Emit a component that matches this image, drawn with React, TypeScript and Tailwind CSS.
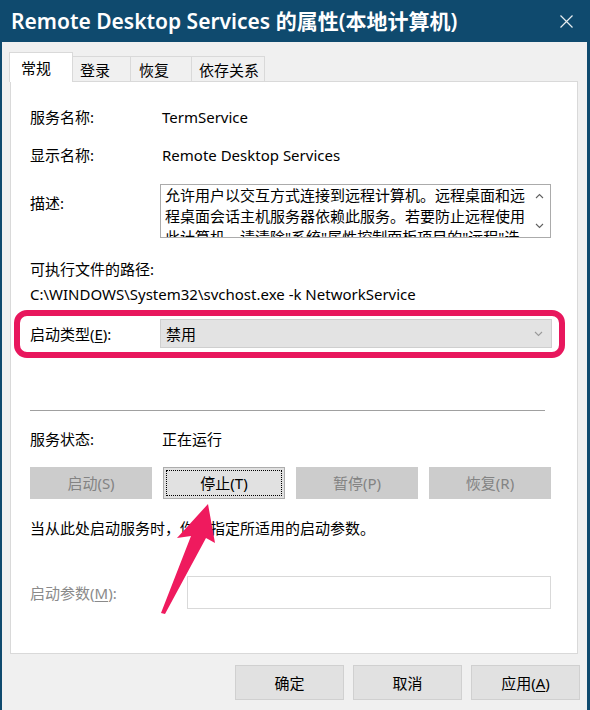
import React from "react";

const disabledBtn =
  "flex h-[32px] items-center justify-center border border-[#cccccc] bg-[#cccccc] text-[#838383]";

function Chevron({ up, className }: { up?: boolean; className?: string }) {
  return (
    <svg width="9" height="6" viewBox="0 0 9 6" className={className}>
      <path
        d={up ? "M1 5 L4.5 1.5 L8 5" : "M1 1 L4.5 4.5 L8 1"}
        fill="none"
        stroke="currentColor"
        strokeWidth="1.1"
      />
    </svg>
  );
}

export default function App() {
  return (
    <div className="relative h-[710px] w-[590px] overflow-hidden bg-[#0f4a6e] font-['Noto_Sans','Noto_Sans_CJK_SC',sans-serif] text-[15px] leading-[20px] text-black">
      {/* title bar */}
      <div className="flex h-[42px] items-center justify-between pl-[11px] pr-[17px]">
        <span className="text-[21px] font-semibold leading-none text-white">
          Remote Desktop Services 的属性(本地计算机)
        </span>
        <svg width="13" height="13" viewBox="0 0 13 13" className="text-white/90">
          <path d="M0.5 0.5 L12.5 12.5 M12.5 0.5 L0.5 12.5" stroke="currentColor" strokeWidth="1.2" />
        </svg>
      </div>

      <div className="ml-[2px] mr-[3px] h-[668px] bg-[#f0f0f0] pt-[10px]">
        {/* tabs */}
        <div className="relative z-10 flex h-[29px] items-end pl-[7px]">
          <div className="mb-[-1px] flex h-[30px] w-[64px] items-start border border-b-0 border-[#d9d9d9] bg-white pl-[11px] pt-[5px]">
            常规
          </div>
          <div className="flex h-[25px] w-[58px] items-start border border-b-0 border-l-0 border-[#d9d9d9] pl-[7px] pt-[3px]">
            登录
          </div>
          <div className="flex h-[25px] w-[61px] items-start border border-b-0 border-l-0 border-[#d9d9d9] pl-[8px] pt-[3px]">
            恢复
          </div>
          <div className="flex h-[25px] w-[73px] items-start border border-b-0 border-l-0 border-[#d9d9d9] pl-[7px] pt-[3px]">
            依存关系
          </div>
        </div>

        {/* panel */}
        <div className="ml-[8px] h-[573px] w-[568px] border border-[#d9d9d9] bg-white">
          <div className="flex flex-col pl-[19px]">
            <div className="mt-[25px] flex h-[20px]">
              <div className="w-[130px]">服务名称:</div>
              <div className="pl-[2px]">TermService</div>
            </div>
            <div className="mt-[18px] flex h-[20px]">
              <div className="w-[130px]">显示名称:</div>
              <div className="pl-[2px]">Remote Desktop Services</div>
            </div>
            <div className="mt-[19px] flex h-[54px]">
              <div className="w-[130px] pt-[9px]">描述:</div>
              <div className="flex h-[54px] w-[391px] border border-[#ababab] bg-white">
                <div className="h-full flex-1 overflow-hidden whitespace-nowrap pl-[4px] leading-[21px]">
                  <div>允许用户以交互方式连接到远程计算机。远程桌面和远</div>
                  <div>程桌面会话主机服务器依赖此服务。若要防止远程使用</div>
                  <div>此计算机，请清除"系统"属性控制面板项目的"远程"选</div>
                </div>
                <div className="flex w-[22px] flex-col items-center justify-between py-[8px] text-[#606060]">
                  <Chevron up />
                  <Chevron />
                </div>
              </div>
            </div>
            <div className="mt-[21px] h-[20px]">可执行文件的路径:</div>
            <div className="mt-[5px] h-[20px]">
              {"C:\\WINDOWS\\System32\\svchost.exe -k NetworkService"}
            </div>
          </div>

          {/* highlighted startup type */}
          <div className="ml-[3px] mt-[6px] h-[48px] w-[551px] rounded-[13px] border-[6px] border-[#e8175d] pl-[10px] pt-[3px]">
            <div className="flex h-[29px] items-center">
              <div className="w-[130px]">
                启动类型(<span className="underline underline-offset-2">E</span>):
              </div>
              <div className="flex h-[29px] w-[392px] items-center justify-between border border-[#cfcfcf] bg-[#e3e3e3] pl-[5px] pr-[8px]">
                <span>禁用</span>
                <Chevron className="text-[#9a9a9a]" />
              </div>
            </div>
          </div>

          <div className="flex flex-col pl-[19px]">
            <div className="mt-[52px] h-px w-[515px] bg-[#a0a0a0]" />
            <div className="mt-[18px] flex h-[20px]">
              <div className="w-[132px]">服务状态:</div>
              <div>正在运行</div>
            </div>
            <div className="mt-[18px] grid w-[521px] grid-cols-4 gap-[11px]">
              <div className={disabledBtn}>启动(S)</div>
              <div className="flex h-[32px] items-center justify-center border border-[#adadad] bg-[#e1e1e1] p-[2px]">
                <div className="flex h-full w-full items-center justify-center border border-dotted border-black">
                  停止(T)
                </div>
              </div>
              <div className={disabledBtn}>暂停(P)</div>
              <div className={disabledBtn}>恢复(R)</div>
            </div>
            <div className="mt-[19px] h-[20px]">当从此处启动服务时，你可指定所适用的启动参数。</div>
            <div className="mt-[38px] flex h-[33px] items-center">
              <div className="w-[157px] text-[#8a8a8a]">
                启动参数(<span className="underline underline-offset-2">M</span>):
              </div>
              <div className="h-[33px] w-[364px] border border-[#d9d9d9] bg-white" />
            </div>
          </div>
        </div>

        {/* dialog buttons */}
        <div className="mt-[11px] flex justify-end gap-[9px] pr-[7px]">
          <div className="flex h-[35px] w-[109px] items-center justify-center border border-[#d0d0d0] bg-[#e1e1e1]">
            确定
          </div>
          <div className="flex h-[35px] w-[109px] items-center justify-center border border-[#d0d0d0] bg-[#e1e1e1]">
            取消
          </div>
          <div className="flex h-[35px] w-[109px] items-center justify-center border border-[#d0d0d0] bg-[#e1e1e1]">
            应用(<span className="underline underline-offset-2">A</span>)
          </div>
        </div>
      </div>

      {/* annotation arrow */}
      <svg
        className="pointer-events-none absolute left-0 top-0"
        width="590"
        height="710"
        viewBox="0 0 590 710"
      >
        <polygon
          points="208,504 215,543 206,538 165,614 161,613 191,536 177,538"
          fill="#ef1a5e"
        />
      </svg>
    </div>
  );
}
